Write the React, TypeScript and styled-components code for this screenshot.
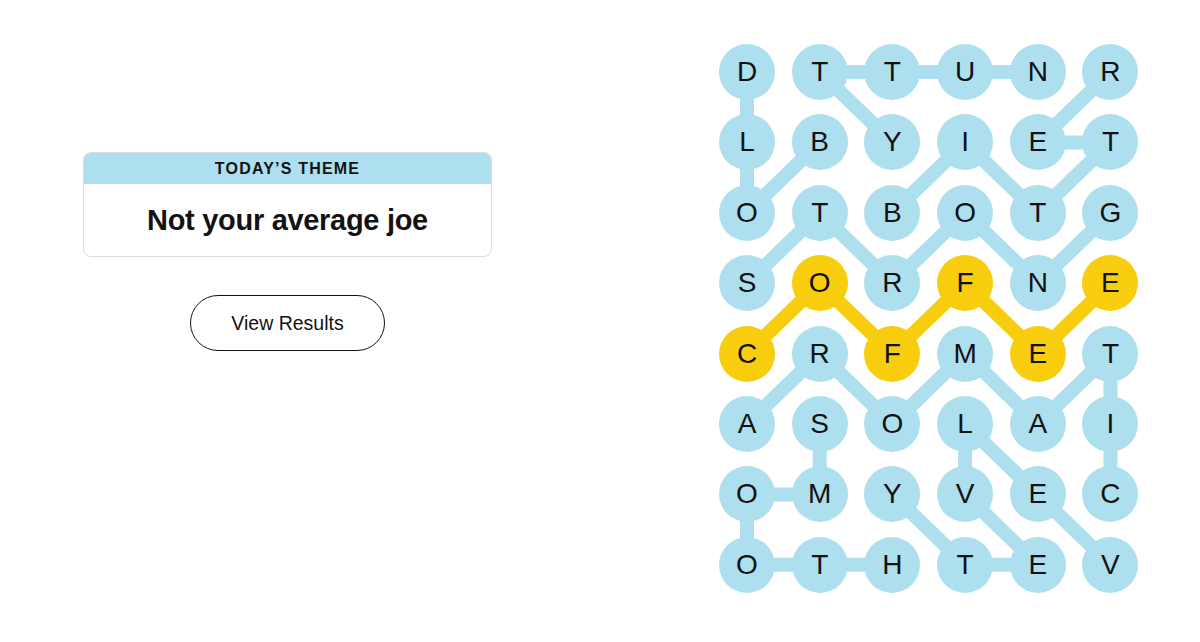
import styled, { createGlobalStyle } from "styled-components";

type Cell = [number, number];

type Word = {
    cells: Cell[];
    spangram?: boolean;
}

const LETTERS = [
    "DTTUNR",
    "LBYIET",
    "OTBOTG",
    "SORFNE",
    "CRFMET",
    "ASOLAI",
    "OMYVEC",
    "OTHTEV",
];

const WORDS: Word[] = [
    {cells: [[0, 0], [1, 0], [2, 0], [1, 1]]},
    {cells: [[0, 4], [0, 3], [0, 2], [0, 1], [1, 2]]},
    {cells: [[2, 2], [1, 3], [2, 4], [1, 5], [1, 4], [0, 5]]},
    {cells: [[3, 0], [2, 1], [3, 2], [2, 3], [3, 4], [2, 5]]},
    {cells: [[5, 0], [4, 1], [5, 2], [4, 3], [5, 4], [4, 5], [5, 5], [6, 5]]},
    {cells: [[5, 1], [6, 1], [6, 0], [7, 0], [7, 1], [7, 2]]},
    {cells: [[7, 5], [6, 4], [5, 3], [6, 3], [7, 4], [7, 3], [6, 2]]},
    {cells: [[4, 0], [3, 1], [4, 2], [3, 3], [4, 4], [3, 5]], spangram: true},
];

const CELL = 56;
const COL_GAP = 16.7;
const ROW_GAP = 14.4;
const BOARD_W = CELL * 6 + COL_GAP * 5;
const BOARD_H = CELL * 8 + ROW_GAP * 7;

const BLUE = "#aedfee";
const YELLOW = "#f7cd0e";

const centre = ([r, c]: Cell) =>
    `${CELL / 2 + c * (CELL + COL_GAP)},${CELL / 2 + r * (CELL + ROW_GAP)}`;

const spanCells = new Set(
    WORDS.filter(w => w.spangram).flatMap(w => w.cells.map(([r, c]) => `${r}-${c}`))
);

export default function App() {
    return (
        <>
            <GlobalStyle/>
            <PageStyle>
                <SidePanelStyle>
                    <ThemeCardStyle>
                        <ThemeHeaderStyle>Today’s Theme</ThemeHeaderStyle>
                        <ThemeTitleStyle>Not your average joe</ThemeTitleStyle>
                    </ThemeCardStyle>
                    <ResultsButtonStyle>View Results</ResultsButtonStyle>
                </SidePanelStyle>
                <BoardWrapStyle>
                    <BoardStyle>
                        <ConnectorsStyle width={BOARD_W} height={BOARD_H} viewBox={`0 0 ${BOARD_W} ${BOARD_H}`}>
                            {WORDS.map((w, i) => (
                                <polyline
                                    key={i}
                                    points={w.cells.map(centre).join(" ")}
                                    fill="none"
                                    stroke={w.spangram ? YELLOW : BLUE}
                                    strokeWidth={14}
                                    strokeLinejoin="round"
                                />
                            ))}
                        </ConnectorsStyle>
                        {LETTERS.flatMap((row, r) =>
                            row.split("").map((ch, c) => (
                                <LetterStyle key={`${r}-${c}`} $span={spanCells.has(`${r}-${c}`)}>
                                    {ch}
                                </LetterStyle>
                            ))
                        )}
                    </BoardStyle>
                </BoardWrapStyle>
            </PageStyle>
        </>
    )
}

const GlobalStyle = createGlobalStyle`
  body {
    margin: 0;
    background: #fff;
    font-family: "Liberation Sans", Arial, sans-serif;
    color: #121212;
  }
`;

const PageStyle = styled.div`
  display: flex;
  width: 1200px;
  height: 642px;
  overflow: hidden;
`;

const SidePanelStyle = styled.div`
  width: 575px;
  display: flex;
  flex-direction: column;
  align-items: center;
  padding-top: 152px;
  gap: 38px;
`;

const ThemeCardStyle = styled.div`
  width: 409px;
  border: 1px solid #dcdcdc;
  border-radius: 8px;
  overflow: hidden;
  box-sizing: border-box;
`;

const ThemeHeaderStyle = styled.div`
  height: 31px;
  background: ${BLUE};
  display: flex;
  align-items: center;
  justify-content: center;
  text-transform: uppercase;
  font-size: 16px;
  font-weight: 700;
  letter-spacing: 1.2px;
`;

const ThemeTitleStyle = styled.div`
  height: 72px;
  display: flex;
  align-items: center;
  justify-content: center;
  font-size: 29px;
  font-weight: 700;
  letter-spacing: -0.3px;
`;

const ResultsButtonStyle = styled.button`
  width: 195px;
  height: 56px;
  border: 1.5px solid #121212;
  border-radius: 28px;
  background: #fff;
  font-family: "Liberation Sans", Arial, sans-serif;
  font-size: 19.5px;
  color: #121212;
  cursor: pointer;
`;

const BoardWrapStyle = styled.div`
  padding: 44px 0 0 144px;
`;

const BoardStyle = styled.div`
  position: relative;
  display: grid;
  grid-template-columns: repeat(6, ${CELL}px);
  grid-auto-rows: ${CELL}px;
  column-gap: ${COL_GAP}px;
  row-gap: ${ROW_GAP}px;
`;

const ConnectorsStyle = styled.svg`
  position: absolute;
  left: 0;
  top: 0;
  pointer-events: none;
`;

const LetterStyle = styled.div<{ $span: boolean }>`
  position: relative;
  border-radius: 50%;
  background: ${p => (p.$span ? YELLOW : BLUE)};
  display: flex;
  align-items: center;
  justify-content: center;
  font-size: 28px;
  font-weight: 400;
  color: #121212;
`;
